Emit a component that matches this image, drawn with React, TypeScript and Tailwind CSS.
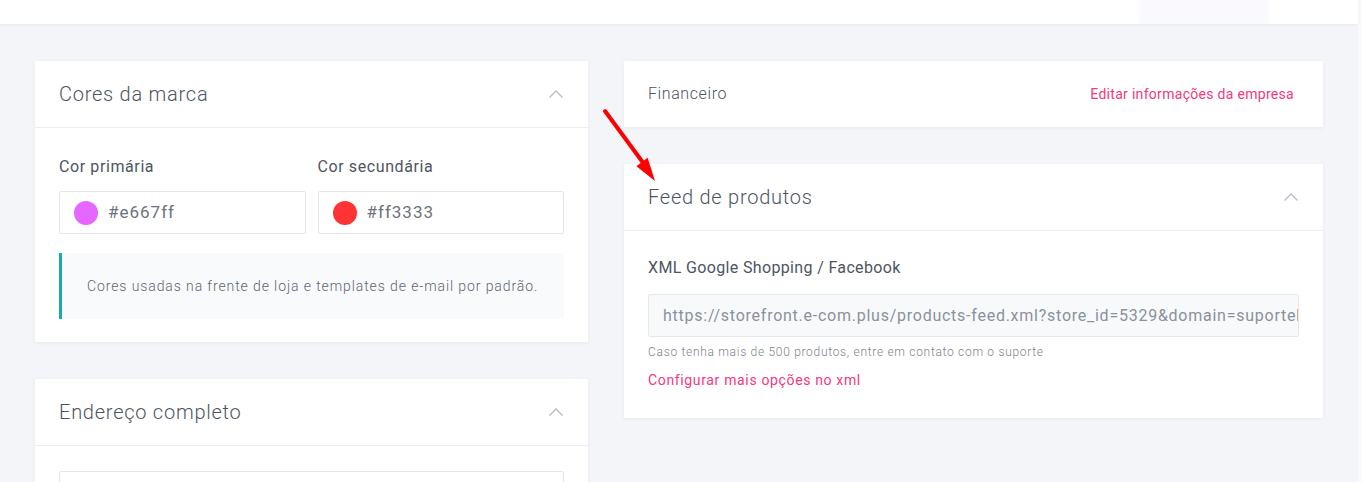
import React from "react";

const Chevron = () => (
  <svg width="16" height="10" viewBox="0 0 16 10" fill="none" className="text-[#b7bdc6]">
    <path d="M1.5 8.5 L8 2 L14.5 8.5" stroke="currentColor" strokeWidth="1.3" />
  </svg>
);

function CardHeader({ title }: { title: string }) {
  return (
    <div className="flex items-center justify-between h-[67px] px-6 border-b border-[#eceef2]">
      <span className="text-[20px] font-light text-[#4d5562] tracking-[0.75px]">{title}</span>
      <Chevron />
    </div>
  );
}

export default function App() {
  return (
    <div
      className="w-[1362px] h-[482px] overflow-hidden bg-[#f4f5f9] relative flex"
      style={{ fontFamily: "Roboto, 'Noto Sans', sans-serif" }}
    >
      <div className="w-[1358px] shrink-0 flex flex-col">
        <div className="h-[24px] shrink-0 bg-white shadow-[0_1px_3px_rgba(0,0,0,0.06)] flex justify-end pr-[89px] relative z-10">
          <div className="w-[130px] h-full bg-[#faf9fe]" />
        </div>
        <div className="flex gap-[36px] px-[35px] pt-[37px]">
          <div className="w-[553px] shrink-0 flex flex-col gap-[37px]">
            <div className="bg-white shadow-[0_1px_4px_rgba(0,0,0,0.05)]">
              <CardHeader title="Cores da marca" />
              <div className="px-6 pt-[29px] pb-[23px]">
                <div className="flex gap-3">
                  <div className="flex-1">
                    <div className="text-[16px] text-[#4d5562] mb-[14px] leading-5 tracking-[0.6px]">Cor primária</div>
                    <div className="h-[43px] border border-[#e3e6ea] rounded-[2px] flex items-center px-[14px] gap-[10px]">
                      <span className="w-6 h-6 rounded-full bg-[#e667ff]" />
                      <span className="text-[17px] text-[#6c737d] tracking-[1px]">#e667ff</span>
                    </div>
                  </div>
                  <div className="flex-1">
                    <div className="text-[16px] text-[#4d5562] mb-[14px] leading-5 tracking-[0.6px]">Cor secundária</div>
                    <div className="h-[43px] border border-[#e3e6ea] rounded-[2px] flex items-center px-[14px] gap-[10px]">
                      <span className="w-6 h-6 rounded-full bg-[#ff3333]" />
                      <span className="text-[17px] text-[#6c737d] tracking-[1px]">#ff3333</span>
                    </div>
                  </div>
                </div>
                <div className="mt-[19px] h-[66px] bg-[#f9fafc] border-l-[3px] border-[#1aa8b3] flex items-center pl-[25px]">
                  <span className="text-[14px] font-light text-[#5f6670] tracking-[0.9px]">
                    Cores usadas na frente de loja e templates de e-mail por padrão.
                  </span>
                </div>
              </div>
            </div>
            <div className="bg-white shadow-[0_1px_4px_rgba(0,0,0,0.05)]">
              <CardHeader title="Endereço completo" />
              <div className="px-6 pt-[25px]">
                <div className="h-[43px] border border-[#e3e6ea] rounded-[2px]" />
              </div>
            </div>
          </div>
          <div className="w-[699px] shrink-0 min-w-0 flex flex-col gap-[37px]">
            <div className="bg-white h-[66px] shadow-[0_1px_4px_rgba(0,0,0,0.05)] flex items-center justify-between px-6 pr-[29px]">
              <span className="text-[16px] font-light text-[#4d5562] tracking-[0.6px]">Financeiro</span>
              <span className="text-[14px] text-[#f4377e] tracking-[0.3px]">Editar informações da empresa</span>
            </div>
            <div className="bg-white shadow-[0_1px_4px_rgba(0,0,0,0.05)]">
              <CardHeader title="Feed de produtos" />
              <div className="px-6 pt-[27px] pb-[30px]">
                <div className="text-[16px] text-[#4d5562] leading-5 tracking-[0.35px]">XML Google Shopping / Facebook</div>
                <div className="mt-[16px] h-[43px] w-[651px] bg-[#f8f9fb] border border-[#e6e8ec] rounded-[2px] flex items-center px-[14px] overflow-hidden whitespace-nowrap">
                  <span className="text-[16px] text-[#8a919b] tracking-[0.75px]">
                    https://storefront.e-com.plus/products-feed.xml?store_id=5329&amp;domain=suporteb
                  </span>
                </div>
                <div className="mt-[7px] text-[12px] font-light text-[#7d848e] leading-4 tracking-[0.7px]">
                  Caso tenha mais de 500 produtos, entre em contato com o suporte
                </div>
                <div className="mt-[12px] text-[14px] text-[#f4377e] leading-4 tracking-[0.65px]">Configurar mais opções no xml</div>
              </div>
            </div>
          </div>
        </div>
      </div>
      <div className="w-[4px] bg-[#fafafb]" />
      <svg className="absolute left-[600px] top-[105px]" width="70" height="80" viewBox="0 0 70 80">
        <line x1="5" y1="6" x2="44" y2="59" stroke="#ff0000" strokeWidth="4" strokeLinecap="round" />
        <polygon points="55,76 36.4,61.2 47.6,52.8" fill="#ff0000" />
      </svg>
    </div>
  );
}
